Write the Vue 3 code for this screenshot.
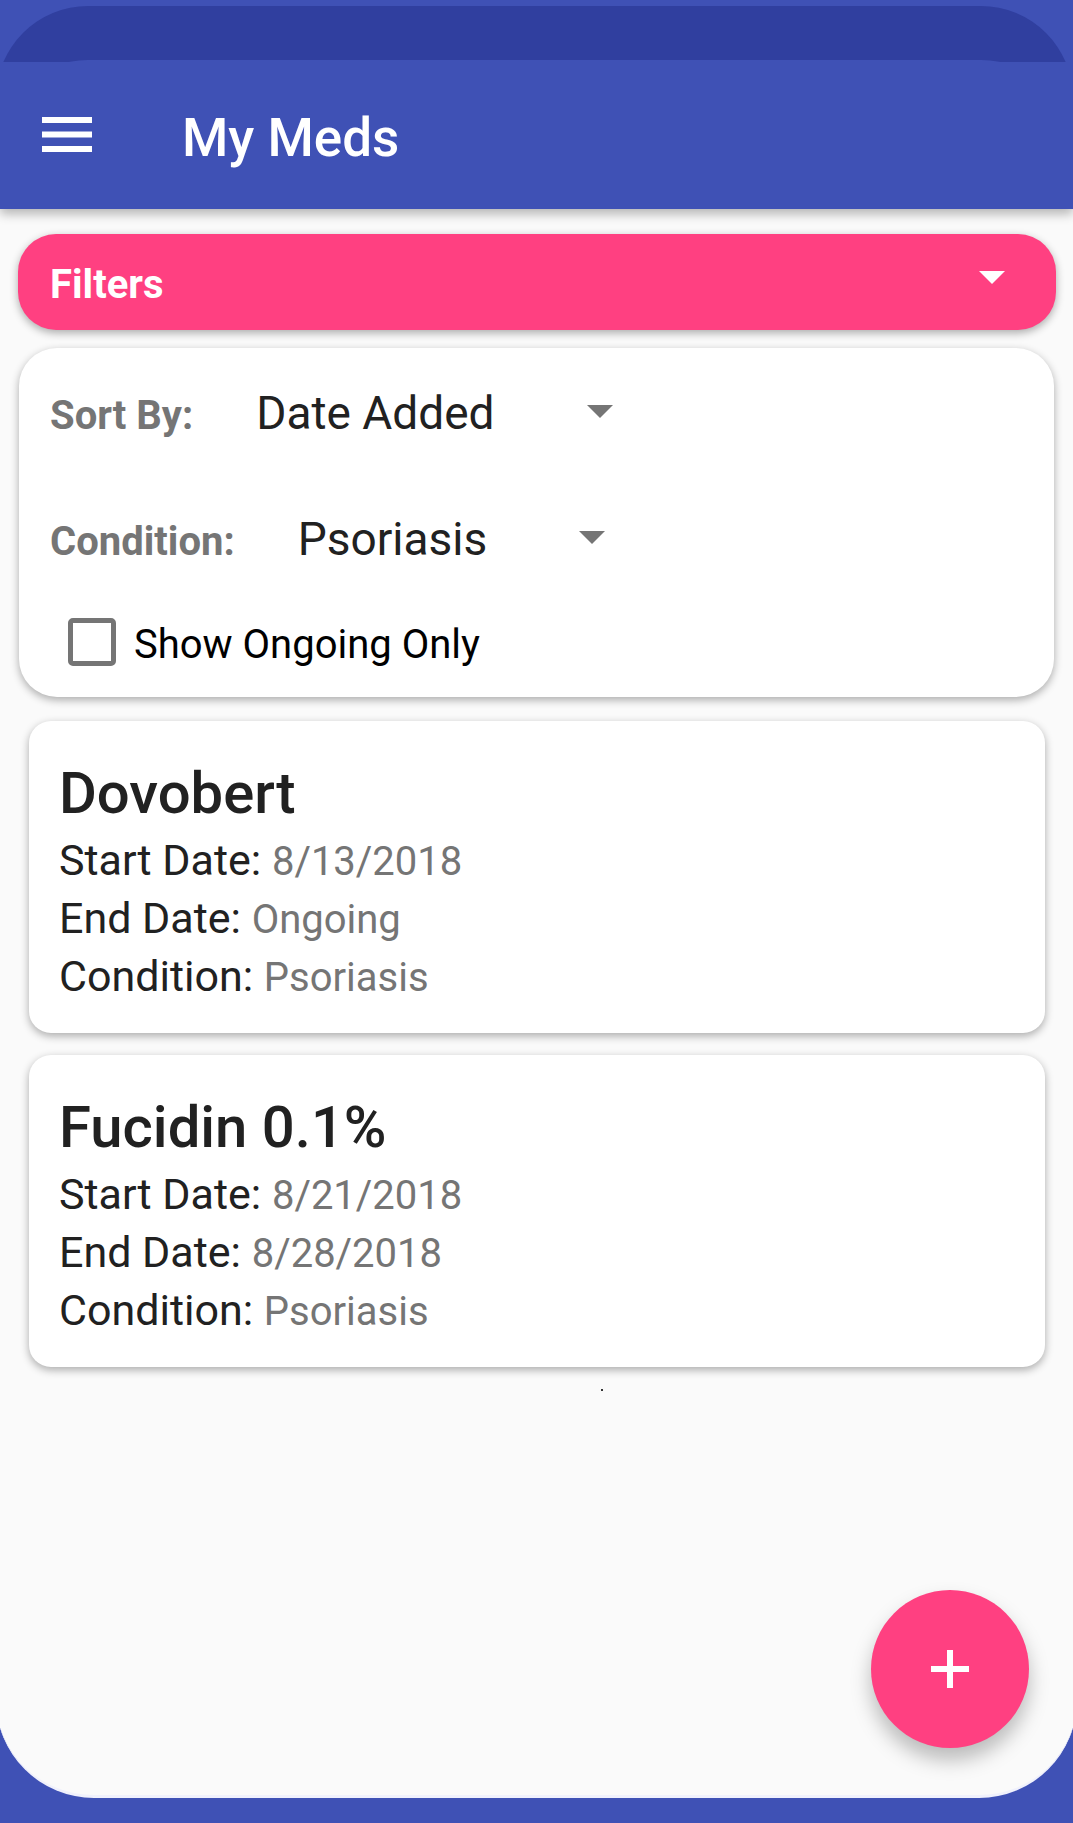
<script setup>
import { ref, computed } from 'vue'

const filtersOpen = ref(true)
const sortBy = ref('Date Added')
const condition = ref('Psoriasis')
const ongoingOnly = ref(false)

const meds = [
  { name: 'Dovobert', start: '8/13/2018', end: 'Ongoing', condition: 'Psoriasis' },
  { name: 'Fucidin 0.1%', start: '8/21/2018', end: '8/28/2018', condition: 'Psoriasis' },
]

const visibleMeds = computed(() =>
  meds.filter((med) => !ongoingOnly.value || med.end === 'Ongoing')
)
</script>

<template>
  <div class="screen">
    <div class="status-bar"></div>
    <header class="app-bar">
      <button class="menu-button" type="button" aria-label="Open menu">
        <svg width="50" height="35" viewBox="0 0 50 35" fill="#fff" aria-hidden="true">
          <path d="M0 0h50v6H0zM0 14.500h50v6H0zM0 29h50v6H0z" />
        </svg>
      </button>
      <h1 class="title">My Meds</h1>
    </header>

    <main class="content">
      <button
        class="filters-toggle"
        type="button"
        :aria-expanded="filtersOpen"
        @click="filtersOpen = !filtersOpen"
      >
        <span>Filters</span>
        <svg class="toggle-arrow" width="26" height="13" viewBox="0 0 26 13" fill="#fff" aria-hidden="true">
          <path d="M0 0h26L13 13z" />
        </svg>
      </button>

      <section v-if="filtersOpen" class="filters-panel">
        <div class="field">
          <label for="sort-by">Sort By:</label>
          <div class="select-wrap">
            <select id="sort-by" v-model="sortBy">
              <option>Date Added</option>
            </select>
            <svg class="select-arrow" width="26" height="13" viewBox="0 0 26 13" fill="#757575" aria-hidden="true">
              <path d="M0 0h26L13 13z" />
            </svg>
          </div>
        </div>
        <div class="field">
          <label for="condition">Condition:</label>
          <div class="select-wrap">
            <select id="condition" v-model="condition">
              <option>Psoriasis</option>
            </select>
            <svg class="select-arrow" width="26" height="13" viewBox="0 0 26 13" fill="#757575" aria-hidden="true">
              <path d="M0 0h26L13 13z" />
            </svg>
          </div>
        </div>
        <label class="check">
          <input v-model="ongoingOnly" type="checkbox" />
          <span>Show Ongoing Only</span>
        </label>
      </section>

      <ul class="med-list">
        <li v-for="med in visibleMeds" :key="med.name" class="med-card">
          <h2>{{ med.name }}</h2>
          <dl>
            <div><dt>Start Date:</dt>&#32;<dd>{{ med.start }}</dd></div>
            <div><dt>End Date:</dt>&#32;<dd>{{ med.end }}</dd></div>
            <div><dt>Condition:</dt>&#32;<dd>{{ med.condition }}</dd></div>
          </dl>
        </li>
      </ul>
      <div class="end-mark"></div>

      <button class="fab" type="button" aria-label="Add medication">
        <svg width="38" height="38" viewBox="0 0 38 38" fill="#fff" aria-hidden="true">
          <path d="M16 0h6v16h16v6H22v16h-6V22H0v-6h16z" />
        </svg>
      </button>
    </main>
  </div>
</template>

<style>
body {
  margin: 0;
  background: #3f51b5;
}
</style>

<style scoped>
.screen {
  box-sizing: border-box;
  display: flex;
  flex-direction: column;
  min-height: 100vh;
  padding: 6px 0 25px;
  overflow: hidden;
  background: #3f51b5;
  font-family: Roboto, 'Liberation Sans', sans-serif;
  color: #212121;
}

button,
select {
  margin: 0;
  border: 0;
  font-family: inherit;
}

h1,
h2,
dl,
dd,
ul {
  margin: 0;
  padding: 0;
}

/* The bar is the top slice of two taller rounded shapes, one below the other. */
.status-bar {
  height: 56px;
  margin: 0 0 0 -4px;
  overflow: hidden;
}

.status-bar::before,
.status-bar::after {
  content: '';
  display: block;
  height: 200px;
  border-radius: 92px;
  background: #303f9f;
}

.status-bar::after {
  margin-top: -146px;
  background: #3f51b5;
}

.app-bar {
  position: relative;
  z-index: 1;
  display: flex;
  align-items: flex-start;
  gap: 90px;
  height: 147px;
  padding: 0 42px;
  box-sizing: border-box;
  background: #3f51b5;
  box-shadow: 0 5px 10px rgba(0, 0, 0, 0.28);
  clip-path: inset(0 0 -20px);
}

.menu-button {
  display: block;
  margin-top: 55px;
  padding: 0;
  background: none;
}

.menu-button svg,
.fab svg {
  display: block;
}

.title {
  margin-top: 45px;
  color: #fff;
  font-size: 53px;
  font-weight: 500;
  line-height: 62px;
}

.content {
  position: relative;
  flex: 1;
  display: flex;
  flex-direction: column;
  box-sizing: border-box;
  margin: 0 -4px;
  padding: 25px 4px 200px;
  border-bottom: 3px solid #f0f1fc;
  border-radius: 0 0 98px 98px;
  background: #fafafa;
}

.filters-toggle {
  display: flex;
  justify-content: space-between;
  align-items: flex-start;
  margin: 0 17px 0 18px;
  padding: 27px 51px 21px 32px;
  border-radius: 38px;
  background: #ff4081;
  box-shadow: 0 3px 8px rgba(0, 0, 0, 0.32);
  color: #fff;
  font-size: 40px;
  font-weight: 700;
  line-height: 48px;
}

.toggle-arrow {
  margin-top: 10px;
}

.filters-panel {
  display: flex;
  flex-direction: column;
  margin: 18px 19px 0;
  padding: 38px 31px 26px;
  border-radius: 38px;
  background: #fff;
  box-shadow: 0 3px 8px rgba(0, 0, 0, 0.32);
}

.field {
  display: flex;
  align-items: baseline;
  gap: 63px;
  height: 54px;
  margin-bottom: 72px;
}

.field + .field {
  margin-bottom: 52px;
}

.field label {
  color: #757575;
  font-size: 40px;
  font-weight: 700;
  line-height: 48px;
}

.select-wrap {
  position: relative;
}

.select-wrap select {
  display: block;
  height: 54px;
  padding: 0 118px 0 0;
  appearance: none;
  field-sizing: content;
  background: none;
  color: #212121;
  font-size: 46px;
  line-height: 54px;
}

.select-arrow {
  position: absolute;
  top: 19px;
  right: 0;
  pointer-events: none;
}

.check {
  display: flex;
  align-items: flex-start;
  gap: 18px;
  margin-left: 18px;
  color: #000;
  font-size: 40px;
  line-height: 53px;
}

.check input {
  box-sizing: border-box;
  width: 48px;
  height: 48px;
  margin: 0;
  appearance: none;
  border: 5px solid #757575;
  border-radius: 5px;
  background: #fff;
}

.check input:checked {
  background: #ff4081;
}

.med-list {
  display: flex;
  flex-direction: column;
  gap: 22px;
  margin: 24px 28px 0 29px;
  list-style: none;
}

.med-card {
  padding: 38px 30px 28px;
  border-radius: 22px;
  background: #fff;
  box-shadow: 0 3px 8px rgba(0, 0, 0, 0.32);
}

.med-card h2 {
  margin-bottom: 4px;
  font-size: 58px;
  font-weight: 500;
  line-height: 68px;
}

.med-card dl {
  font-size: 43px;
  line-height: 58px;
}

.med-card dt,
.med-card dd {
  display: inline;
}

.med-card dd {
  color: #757575;
  font-size: 40px;
  line-height: 40px;
}

.end-mark {
  width: 2px;
  height: 2px;
  margin: 22px 0 0 56%;
  background: #333;
}

.fab {
  position: absolute;
  right: 48px;
  bottom: 47px;
  display: flex;
  justify-content: center;
  align-items: center;
  width: 158px;
  height: 158px;
  padding: 0;
  border-radius: 50%;
  background: #ff4081;
  box-shadow: 0 12px 20px rgba(0, 0, 0, 0.26);
}
</style>
